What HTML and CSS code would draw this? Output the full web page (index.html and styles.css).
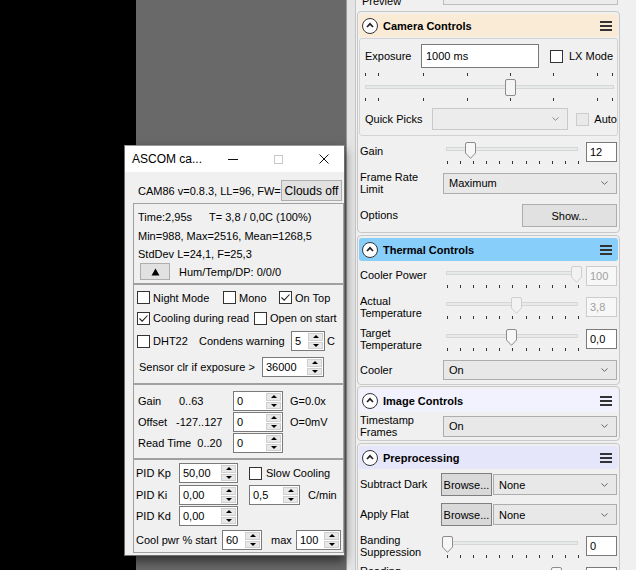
FILE: index.html
```html
<!DOCTYPE html>
<html>
<head>
<meta charset="utf-8">
<title>CAM86</title>
<link rel="stylesheet" href="styles.css">
</head>
<body>
<div class="screen">
  <div class="black"></div>
  <div class="desk"></div>
  <div class="split"></div>

  <div class="side">
    <div class="preview"><span class="pv-lbl">Preview</span><span class="pv-box"></span></div>

    <section class="sec sec-cam">
      <div class="hdr hdr-cam">
        <span class="circ"><svg width="8" height="6" viewBox="0 0 8 6"><polyline points="1,5 4,1.8 7,5" fill="none" stroke="#222" stroke-width="1.7"/></svg></span>
        <span class="htxt">Camera Controls</span>
        <span class="burger"><i></i><i></i><i></i></span>
      </div>
      <div class="subbox">
        <div class="exprow">
          <span class="lbl-exp">Exposure</span>
          <span class="tb tb-exp">1000 ms</span>
          <span class="cb cb-lx"></span>
          <span class="lxl">LX Mode</span>
        </div>
        <div class="xslider">
          <div class="xticks"><i></i><i style="margin-left:12px"></i><i style="margin-left:44px"></i><i style="margin-left:43px"></i><i style="margin-left:42px"></i><i style="margin-left:42px"></i><i style="margin-left:43px"></i><i style="margin-left:14px"></i></div>
          <div class="xarea"><div class="xtrack"></div><span class="xthumb" style="left:140px"></span></div>
          <div class="xticks"><i></i><i style="margin-left:12px"></i><i style="margin-left:44px"></i><i style="margin-left:43px"></i><i style="margin-left:42px"></i><i style="margin-left:42px"></i><i style="margin-left:43px"></i><i style="margin-left:14px"></i></div>
        </div>
        <div class="qprow">
          <span class="lbl-qp">Quick Picks</span>
          <span class="dd dd-dis dd-qp"><span class="ddt"></span><svg class="arr" width="7" height="4" viewBox="0 0 7 4"><polyline points="0.5,0.5 3.5,3.3 6.5,0.5" fill="none" stroke="#888" stroke-width="1"/></svg></span>
          <span class="cb cb-dis"></span>
          <span class="autol">Auto</span>
        </div>
      </div>

      <div class="srow r-gain">
        <span class="lbl">Gain</span>
        <div class="sl">
          <div class="sl-area"><div class="sl-track"></div><svg class="thumb" style="left:22px" width="11" height="17" viewBox="0 0 11 17"><path d="M0.5 2 Q0.5 0.5 2 0.5 H9 Q10.5 0.5 10.5 2 V11 L5.5 16.3 L0.5 11 Z" fill="#f7f7f7" stroke="#8c8c8c"/></svg></div>
          <div class="ticks"><i></i><i></i><i></i><i></i><i></i><i></i><i></i><i></i><i></i><i></i><i></i></div>
        </div>
        <span class="tb tb-num">12</span>
      </div>

      <div class="frow r-frame">
        <span class="lbl lbl2">Frame Rate<br>Limit</span>
        <span class="dd dd-wide"><span class="ddt">Maximum</span><svg class="arr" width="7" height="4" viewBox="0 0 7 4"><polyline points="0.5,0.5 3.5,3.3 6.5,0.5" fill="none" stroke="#666" stroke-width="1"/></svg></span>
      </div>

      <div class="frow r-opt">
        <span class="lbl lbl-grow">Options</span>
        <button class="btn btn-show">Show...</button>
      </div>
    </section>

    <section class="sec sec-therm">
      <div class="hdr hdr-therm">
        <span class="circ"><svg width="8" height="6" viewBox="0 0 8 6"><polyline points="1,5 4,1.8 7,5" fill="none" stroke="#222" stroke-width="1.7"/></svg></span>
        <span class="htxt">Thermal Controls</span>
        <span class="burger"><i></i><i></i><i></i></span>
      </div>

      <div class="srow r-cpow">
        <span class="lbl">Cooler Power</span>
        <div class="sl">
          <div class="sl-area"><div class="sl-track"></div><svg class="thumb" style="left:128px" width="11" height="17" viewBox="0 0 11 17"><path d="M0.5 2 Q0.5 0.5 2 0.5 H9 Q10.5 0.5 10.5 2 V11 L5.5 16.3 L0.5 11 Z" fill="#f2f2f2" stroke="#cfcfcf"/></svg></div>
          <div class="ticks"><i></i><i></i><i></i><i></i><i></i><i></i><i></i><i></i><i></i><i></i><i></i></div>
        </div>
        <span class="tb tb-num tb-dis">100</span>
      </div>

      <div class="srow r-act">
        <span class="lbl lbl2">Actual<br>Temperature</span>
        <div class="sl">
          <div class="sl-area"><div class="sl-track"></div><svg class="thumb" style="left:68px" width="11" height="17" viewBox="0 0 11 17"><path d="M0.5 2 Q0.5 0.5 2 0.5 H9 Q10.5 0.5 10.5 2 V11 L5.5 16.3 L0.5 11 Z" fill="#f2f2f2" stroke="#cfcfcf"/></svg></div>
          <div class="ticks"><i></i><i></i><i></i><i></i><i></i><i></i><i></i><i></i><i></i><i></i><i></i></div>
        </div>
        <span class="tb tb-num tb-dis">3,8</span>
      </div>

      <div class="srow r-tgt">
        <span class="lbl lbl2">Target<br>Temperature</span>
        <div class="sl">
          <div class="sl-area"><div class="sl-track"></div><svg class="thumb" style="left:63px" width="11" height="17" viewBox="0 0 11 17"><path d="M0.5 2 Q0.5 0.5 2 0.5 H9 Q10.5 0.5 10.5 2 V11 L5.5 16.3 L0.5 11 Z" fill="#f7f7f7" stroke="#8c8c8c"/></svg></div>
          <div class="ticks"><i></i><i></i><i></i><i></i><i></i><i></i><i></i><i></i><i></i><i></i><i></i></div>
        </div>
        <span class="tb tb-num">0,0</span>
      </div>

      <div class="frow r-cooler">
        <span class="lbl">Cooler</span>
        <span class="dd dd-wide dd-20"><span class="ddt">On</span><svg class="arr" width="7" height="4" viewBox="0 0 7 4"><polyline points="0.5,0.5 3.5,3.3 6.5,0.5" fill="none" stroke="#666" stroke-width="1"/></svg></span>
      </div>
    </section>

    <section class="sec sec-img">
      <div class="hdr hdr-img">
        <span class="circ"><svg width="8" height="6" viewBox="0 0 8 6"><polyline points="1,5 4,1.8 7,5" fill="none" stroke="#222" stroke-width="1.7"/></svg></span>
        <span class="htxt">Image Controls</span>
        <span class="burger"><i></i><i></i><i></i></span>
      </div>
      <div class="frow r-ts">
        <span class="lbl lbl2">Timestamp<br>Frames</span>
        <span class="dd dd-wide"><span class="ddt">On</span><svg class="arr" width="7" height="4" viewBox="0 0 7 4"><polyline points="0.5,0.5 3.5,3.3 6.5,0.5" fill="none" stroke="#666" stroke-width="1"/></svg></span>
      </div>
    </section>

    <section class="sec sec-pre">
      <div class="hdr hdr-pre">
        <span class="circ"><svg width="8" height="6" viewBox="0 0 8 6"><polyline points="1,5 4,1.8 7,5" fill="none" stroke="#222" stroke-width="1.7"/></svg></span>
        <span class="htxt">Preprocessing</span>
        <span class="burger"><i></i><i></i><i></i></span>
      </div>
      <div class="frow r-dark">
        <span class="lbl lbl-br">Subtract Dark</span>
        <button class="btn btn-browse">Browse...</button>
        <span class="dd dd-none"><span class="ddt">None</span><svg class="arr" width="7" height="4" viewBox="0 0 7 4"><polyline points="0.5,0.5 3.5,3.3 6.5,0.5" fill="none" stroke="#666" stroke-width="1"/></svg></span>
      </div>
      <div class="frow r-flat">
        <span class="lbl lbl-br">Apply Flat</span>
        <button class="btn btn-browse">Browse...</button>
        <span class="dd dd-none"><span class="ddt">None</span><svg class="arr" width="7" height="4" viewBox="0 0 7 4"><polyline points="0.5,0.5 3.5,3.3 6.5,0.5" fill="none" stroke="#666" stroke-width="1"/></svg></span>
      </div>
      <div class="srow r-band">
        <span class="lbl lbl2">Banding<br>Suppression</span>
        <div class="sl">
          <div class="sl-area"><div class="sl-track"></div><svg class="thumb" style="left:-1px" width="11" height="17" viewBox="0 0 11 17"><path d="M0.5 2 Q0.5 0.5 2 0.5 H9 Q10.5 0.5 10.5 2 V11 L5.5 16.3 L0.5 11 Z" fill="#f7f7f7" stroke="#8c8c8c"/></svg></div>
          <div class="ticks"><i></i><i></i><i></i><i></i><i></i><i></i><i></i><i></i><i></i><i></i><i></i></div>
        </div>
        <span class="tb tb-num">0</span>
      </div>
      <div class="srow r-read">
        <span class="lbl lbl2">Reading<br>Mode</span>
        <div class="sl">
          <div class="sl-area"><div class="sl-track"></div><svg class="thumb" style="left:108px" width="11" height="17" viewBox="0 0 11 17"><path d="M0.5 2 Q0.5 0.5 2 0.5 H9 Q10.5 0.5 10.5 2 V11 L5.5 16.3 L0.5 11 Z" fill="#f7f7f7" stroke="#8c8c8c"/></svg></div>
        </div>
        <span class="tb tb-num">0</span>
      </div>
    </section>
  </div>

  <div class="dlg">
    <div class="titlebar">
      <span class="ttl">ASCOM ca...</span>
      <span class="cap-min"></span>
      <span class="cap-max"></span>
      <svg class="cap-close" width="10" height="10" viewBox="0 0 10 10"><path d="M0.5 0.5 L9.5 9.5 M9.5 0.5 L0.5 9.5" stroke="#111" stroke-width="1"/></svg>
    </div>
    <div class="dbody">
      <div class="camrow">
        <span class="camtxt">CAM86 v=0.8.3, LL=96, FW=1</span>
        <button class="btn btn-clouds">Clouds off</button>
      </div>

      <div class="grp g1">
        <div class="ln"><span>Time:2,95s</span><span class="tgap">T= 3,8 / 0,0C (100%)</span></div>
        <div class="ln ln2">Min=988, Max=2516, Mean=1268,5</div>
        <div class="ln">StdDev L=24,1, F=25,3</div>
        <div class="btnrow">
          <button class="btn btn-up"><svg width="9" height="8" viewBox="0 0 9 8"><path d="M4.5 0.5 L8.5 7.5 H0.5 Z" fill="#000"/></svg></button>
          <span class="humtxt">Hum/Temp/DP: 0/0/0</span>
        </div>
      </div>

      <div class="grp g2">
        <div class="grow gr1">
          <span class="chk w86"><span class="cb"></span>Night Mode</span>
          <span class="chk w56"><span class="cb"></span>Mono</span>
          <span class="chk"><span class="cb"><svg width="11" height="11" viewBox="0 0 11 11"><path d="M1.5 5.5 L4.2 8.2 L9.5 2.5" fill="none" stroke="#222" stroke-width="1.1"/></svg></span>On Top</span>
        </div>
        <div class="grow gr2">
          <span class="chk w117"><span class="cb"><svg width="11" height="11" viewBox="0 0 11 11"><path d="M1.5 5.5 L4.2 8.2 L9.5 2.5" fill="none" stroke="#222" stroke-width="1.1"/></svg></span>Cooling during read</span>
          <span class="chk"><span class="cb"></span>Open on start</span>
        </div>
        <div class="grow gr3">
          <span class="chk w62"><span class="cb"></span>DHT22</span>
          <span class="w92">Condens warning</span>
          <span class="spin w34"><span class="sv">5</span><span class="sb"><i class="up"></i><i class="dn"></i></span></span>
          <span class="unit-c">C</span>
        </div>
        <div class="grow gr4">
          <span class="sclr">Sensor clr if exposure &gt;</span>
          <span class="spin w62s"><span class="sv">36000</span><span class="sb"><i class="up"></i><i class="dn"></i></span></span>
        </div>
      </div>

      <div class="grp g3">
        <div class="grow">
          <span class="rng"><span class="rn1">Gain</span><span>0..63</span></span>
          <span class="spin w50"><span class="sv">0</span><span class="sb"><i class="up"></i><i class="dn"></i></span></span>
          <span class="gval">G=0.0x</span>
        </div>
        <div class="grow gap1">
          <span class="rng"><span class="rn2">Offset</span><span>-127..127</span></span>
          <span class="spin w50"><span class="sv">0</span><span class="sb"><i class="up"></i><i class="dn"></i></span></span>
          <span class="gval">O=0mV</span>
        </div>
        <div class="grow gap1">
          <span class="rng">Read Time&nbsp; 0..20</span>
          <span class="spin w50"><span class="sv">0</span><span class="sb"><i class="up"></i><i class="dn"></i></span></span>
        </div>
      </div>

      <div class="grp g4">
        <div class="grow">
          <span class="pidl">PID Kp</span>
          <span class="spin w59"><span class="sv">50,00</span><span class="sb"><i class="up"></i><i class="dn"></i></span></span>
          <span class="chk slow"><span class="cb"></span>Slow Cooling</span>
        </div>
        <div class="grow gap2">
          <span class="pidl">PID Ki</span>
          <span class="spin w59"><span class="sv">0,00</span><span class="sb"><i class="up"></i><i class="dn"></i></span></span>
          <span class="spin w51"><span class="sv">0,5</span><span class="sb"><i class="up"></i><i class="dn"></i></span></span>
          <span class="cmin">C/min</span>
        </div>
        <div class="grow gap1">
          <span class="pidl">PID Kd</span>
          <span class="spin w59"><span class="sv">0,00</span><span class="sb"><i class="up"></i><i class="dn"></i></span></span>
        </div>
        <div class="grow gap4">
          <span class="cooll">Cool pwr % start</span>
          <span class="spin w40"><span class="sv">60</span><span class="sb"><i class="up"></i><i class="dn"></i></span></span>
          <span class="maxl">max</span>
          <span class="spin w45"><span class="sv">100</span><span class="sb"><i class="up"></i><i class="dn"></i></span></span>
        </div>
      </div>
    </div>
  </div>
</div>
</body>
</html>
```

FILE: styles.css
```css
* { box-sizing: border-box; }
html, body { margin: 0; padding: 0; }
body {
  font-family: "Liberation Sans", Arial, sans-serif;
  font-size: 11px;
  color: #000;
  background: #000;
}
button { font-family: inherit; font-size: 11px; color: #000; padding: 0; margin: 0; }

.screen {
  position: relative;
  width: 636px;
  height: 570px;
  overflow: hidden;
  display: flex;
}
.black { width: 136px; background: #000; flex: none; }
.desk { width: 210px; background: #696969; flex: none; }
.split {
  width: 10px;
  flex: none;
  background: #e4e4e4;
  border-left: 1px solid #9a9a9a;
  border-right: 1px solid #c4c4c4;
}
.side {
  width: 280px;
  flex: none;
  background: #f0f0f0;
  padding-left: 1px;
  display: flex;
  flex-direction: column;
}

/* ---------- right panel ---------- */
.preview {
  height: 8px;
  display: flex;
  align-items: flex-end;
  overflow: hidden;
  padding-left: 5px;
  flex: none;
}
.pv-lbl { width: 81px; line-height: 13px; }
.pv-box {
  width: 175px;
  height: 20px;
  margin-bottom: 3px;
  border: 1px solid #bcbcbc;
  background: #ececec;
}

.sec {
  width: 263px;
  border: 1px solid #c8c8c8;
  border-radius: 4px;
  margin-top: 2px;
  flex: none;
}
.sec-cam { margin-top: 3px; padding-bottom: 5px; }
.sec-therm { padding-bottom: 4px; }
.sec-img { margin-top: 1px; padding-bottom: 2px; }

.hdr {
  height: 23px;
  margin: 2px 1px 0;
  border-radius: 3px;
  display: flex;
  align-items: center;
  padding: 0 6px 0 3px;
  font-weight: bold;
}
.hdr-cam { background: #faebd7; }
.hdr-therm { background: #87cefa; }
.hdr-img { background: #f2f2fe; }
.hdr-pre { background: #e6e6fa; }
.circ {
  width: 16px;
  height: 16px;
  border: 1.5px solid #333;
  border-radius: 50%;
  background: #fff;
  display: flex;
  align-items: center;
  justify-content: center;
}
.circ svg { margin-top: -1px; }
.htxt { margin-left: 5px; }
.burger {
  margin-left: auto;
  width: 12px;
  display: flex;
  flex-direction: column;
  gap: 2px;
}
.burger i { display: block; height: 2px; background: #333; }

.subbox {
  margin: 1px 1px 0;
  border: 1px solid #d3d3d3;
  border-radius: 3px;
  padding: 5px 0 5px 5px;
  overflow: hidden;
}
.exprow { display: flex; align-items: center; height: 24px; }
.lbl-exp { width: 56px; }
.tb {
  border: 1px solid #7a7a7a;
  background: #fff;
  padding-left: 3px;
  display: flex;
  align-items: center;
}
.tb-exp { width: 118px; height: 24px; padding-left: 4px; }
.cb-lx { margin-left: 11px; }
.lxl { margin-left: 6px; }

.xslider { margin-top: 5px; width: 249px; }
.xticks { display: flex; height: 3px; }
.xticks i { display: block; width: 1px; height: 3px; background: #333; flex: none; }
.xarea { position: relative; height: 22px; padding-top: 9px; }
.xtrack { height: 4px; border: 1px solid #d6d6d6; background: #e7eaea; }
.xthumb {
  position: absolute;
  top: 3px;
  width: 11px;
  height: 17px;
  border: 1px solid #8c8c8c;
  border-radius: 2px;
  background: #f4f4f4;
}

.qprow { display: flex; align-items: center; height: 22px; margin-top: 7px; white-space: nowrap; }
.lbl-qp { width: 67px; }
.dd {
  display: flex;
  align-items: center;
  height: 21px;
  border: 1px solid #adadad;
  background: #e8e8e8;
  padding: 0 8px 0 5px;
}
.ddt { flex: 1; }
.arr { flex: none; }
.dd-qp { width: 137px; height: 22px; }
.dd-dis { background: #ececec; border-color: #c9c9c9; }
.cb-dis { margin-left: 8px; border-color: #cccccc !important; background: #e9e9e9 !important; }
.autol { margin-left: 5px; }

.srow {
  display: flex;
  align-items: center;
  height: 22px;
  padding-left: 2px;
}
.srow .lbl { margin-bottom: 3px; }
.lbl { width: 83px; line-height: 13px; flex: none; }
.lbl2 { line-height: 12px; }
.lbl-grow { flex: 1; }
.sl { width: 141px; align-self: flex-start; flex: none; }
.sl-area { position: relative; height: 19px; padding-top: 5px; }
.sl-track {
  margin-left: 3px;
  width: 132px;
  height: 4px;
  border: 1px solid #d6d6d6;
  background: #e7eaea;
}
.thumb { position: absolute; top: 0; }
.ticks {
  display: flex;
  justify-content: space-between;
  margin-left: 4px;
  width: 132px;
  height: 3px;
}
.ticks i { display: block; width: 1px; height: 3px; background: #333; }
.tb-num {
  width: 31px;
  height: 20px;
  margin-left: 2px;
  align-self: flex-start;
}
.tb-dis { color: #a0a0a0; background: #f7f7f7; border-color: #cccccc; }

.frow { display: flex; align-items: center; padding-left: 2px; }
.dd-wide { width: 174px; }
.dd-20 { height: 20px; }
.btn {
  background: #e1e1e1;
  border: 1px solid #adadad;
}
.btn-show { width: 95px; height: 23px; margin-right: 2px; }

.r-gain { margin-top: 6px; }
.r-frame { margin-top: 7px; height: 24px; }
.r-opt { margin-top: 9px; height: 23px; }

.r-cpow { margin-top: 5px; }
.r-act { margin-top: 9px; }
.r-tgt { margin-top: 10px; }
.r-cooler { margin-top: 9px; height: 20px; }

.r-ts { margin-top: 2px; height: 24px; }

.r-dark { margin-top: 4px; height: 23px; }
.r-flat { margin-top: 7px; height: 23px; }
.r-band { margin-top: 10px; }
.r-read { margin-top: 9px; }
.lbl-br { width: 81px; }
.btn-browse { width: 51px; height: 23px; background: #d9d9d9; border-color: #7f7f7f; }
.dd-none { width: 124px; margin-left: 1px; }

/* ---------- checkbox ---------- */
.cb {
  width: 13px;
  height: 13px;
  border: 1px solid #333;
  background: #fff;
  display: inline-flex;
  align-items: center;
  justify-content: center;
  flex: none;
}

/* ---------- dialog ---------- */
.dlg {
  position: absolute;
  left: 124px;
  top: 145px;
  width: 221px;
  height: 411px;
  border: 1px solid #6d6d6d;
  border-top-color: #9a9a9a;
  background: #f0f0f0;
  box-shadow: 0 5px 10px rgba(0, 0, 0, 0.55);
  display: flex;
  flex-direction: column;
}
.titlebar {
  height: 26px;
  background: #fff;
  display: flex;
  align-items: center;
  flex: none;
}
.ttl { width: 103px; padding-left: 7px; font-size: 12px; }
.cap-min { width: 10px; height: 1px; background: #111; }
.cap-max { width: 9px; height: 9px; border: 1px solid #c8c8c8; margin-left: 36px; }
.cap-close { margin-left: 36px; }

.dbody { flex: 1; }
.camrow {
  margin-top: 8px;
  height: 21px;
  display: flex;
  align-items: center;
}
.camtxt {
  flex: 1;
  padding-left: 13px;
  overflow: hidden;
  white-space: nowrap;
}
.btn-clouds { width: 61px; height: 21px; margin-right: 2px; font-size: 12px; }

.grp {
  margin-left: 8px;
  width: 211px;
  border: 1px solid #a0a0a0;
}
.g1 { margin-top: 2px; height: 81px; padding: 4px 0 0 4px; }
.ln { line-height: 18px; white-space: nowrap; }
.ln2 { margin-top: 1px; }
.tgap { margin-left: 17px; }
.btnrow { display: flex; align-items: center; height: 17px; }
.btn-up {
  width: 30px;
  height: 17px;
  margin-left: 2px;
  display: flex;
  align-items: center;
  justify-content: center;
}
.humtxt { margin-left: 9px; }

.g2 { height: 100px; padding: 3px 0 0 3px; }
.grow { display: flex; align-items: center; height: 20px; white-space: nowrap; }
.gr1 { height: 19px; }
.gr2 { margin-top: 1px; }
.gr3 { margin-top: 3px; }
.gr4 { margin-top: 6px; }
.chk { display: flex; align-items: center; gap: 3px; }
.w86 { width: 86px; }
.w56 { width: 56px; }
.w117 { width: 117px; }
.w62 { width: 62px; }
.w92 { width: 92px; }
.unit-c { margin-left: 2px; }
.sclr { width: 123px; margin-left: 2px; }

.spin {
  display: flex;
  height: 20px;
  border: 1px solid #7a7a7a;
  background: #fff;
  flex: none;
}
.sv { flex: 1; padding-left: 3px; line-height: 18px; }
.sb {
  width: 15px;
  margin: 1px;
  display: flex;
  flex-direction: column;
  gap: 1px;
}
.sb i {
  flex: 1;
  background: #e8e8e8;
  border: 1px solid #cfcfcf;
  display: flex;
  align-items: center;
  justify-content: center;
}
.sb i::before {
  content: "";
  border-left: 3px solid transparent;
  border-right: 3px solid transparent;
}
.sb .up::before { border-bottom: 3px solid #000; }
.sb .dn::before { border-top: 3px solid #000; }
.w34 { width: 34px; }
.w62s { width: 62px; }
.w50 { width: 50px; }
.w59 { width: 59px; }
.w51 { width: 51px; }
.w40 { width: 40px; }
.w45 { width: 45px; }

.g3 { height: 75px; padding: 6px 0 0 4px; }
.gap1 { margin-top: 1px; }
.gap2 { margin-top: 2px; }
.gap4 { margin-top: 4px; }
.rng { width: 95px; display: flex; }
.rn1 { width: 41px; }
.rn2 { width: 38px; }
.gval { margin-left: 7px; }

.g4 { height: 94px; padding: 3px 0 0 2px; }
.pidl { width: 43px; }
.slow { margin-left: 11px; gap: 4px; }
.w51 { margin-left: 11px; }
.cmin { margin-left: 8px; }
.cooll { width: 86px; }
.maxl { margin-left: 9px; width: 25px; }
```
